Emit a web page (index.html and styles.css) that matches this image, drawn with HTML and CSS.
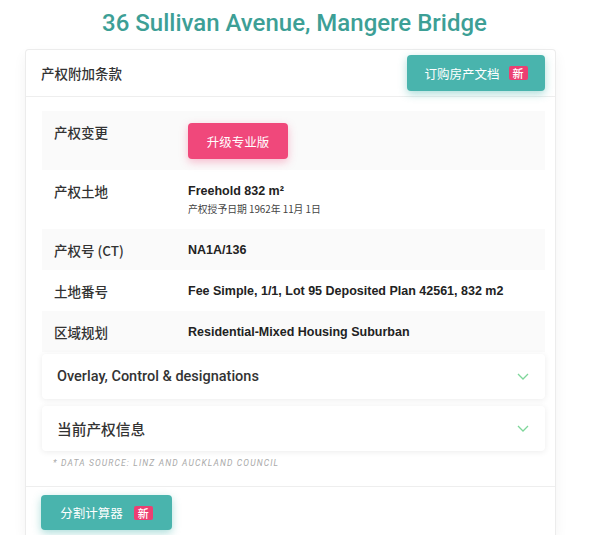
FILE: index.html
```html
<!doctype html>
<html lang="zh">
<head>
<meta charset="UTF-8">
<title>36 Sullivan Avenue, Mangere Bridge</title>
<link rel="stylesheet" href="styles.css">
</head>
<body>
<h1 class="title">36 Sullivan Avenue, Mangere Bridge</h1>

<div class="card">
  <div class="card_head">
    <span class="head_label">产权附加条款</span>
    <a class="btn btn_teal btn_order" href="#">订购房产文档 <span class="badge">新</span></a>
  </div>

  <div class="card_body">
    <div class="row row_gray row_tall">
      <div class="row_label">产权变更</div>
      <div class="row_value"><a class="btn btn_pink" href="#">升级专业版</a></div>
    </div>
    <div class="row row_tall">
      <div class="row_label">产权土地</div>
      <div class="row_value">
        <div class="val">Freehold 832 m²</div>
        <div class="sub">产权授予日期 1962年 11月 1日</div>
      </div>
    </div>
    <div class="row row_gray">
      <div class="row_label">产权号 (CT)</div>
      <div class="row_value"><div class="val">NA1A/136</div></div>
    </div>
    <div class="row">
      <div class="row_label">土地番号</div>
      <div class="row_value"><div class="val">Fee Simple, 1/1, Lot 95 Deposited Plan 42561, 832 m2</div></div>
    </div>
    <div class="row row_gray">
      <div class="row_label">区域规划</div>
      <div class="row_value"><div class="val">Residential-Mixed Housing Suburban</div></div>
    </div>

    <div class="fold">
      <span class="fold_title">Overlay, Control &amp; designations</span>
      <svg class="chev" width="12" height="7" viewBox="0 0 12 7"><path d="M1 1l5 5 5-5" fill="none" stroke="#7ed69a" stroke-width="1.3"/></svg>
    </div>
    <div class="fold">
      <span class="fold_title cjk">当前产权信息</span>
      <svg class="chev" width="12" height="7" viewBox="0 0 12 7"><path d="M1 1l5 5 5-5" fill="none" stroke="#7ed69a" stroke-width="1.3"/></svg>
    </div>

    <div class="source">* Data source: LINZ and Auckland Council</div>
  </div>

  <div class="card_foot">
    <a class="btn btn_teal btn_calc" href="#">分割计算器 <span class="badge">新</span></a>
  </div>
</div>
</body>
</html>
```

FILE: styles.css
```css
*{
  margin:0;
  padding:0;
  box-sizing:border-box;
}
body{
  background:#fff;
  font-family:"Noto Sans CJK SC","Noto Sans",sans-serif;
  color:#333;
}
a{
  text-decoration:none;
}
.title{
  font-family:Roboto,"Noto Sans",sans-serif;
  font-weight:500;
  font-size:24px;
  line-height:28px;
  color:#3d9f96;
  text-align:center;
  padding:9px 0 0 0;
}
.card{
  margin:12px 0 0 25px;
  width:531px;
  height:486px;
  border:1px solid #ececec;
  border-bottom:none;
  border-radius:4px 4px 0 0;
  background:#fff;
  box-shadow:0 6px 14px rgba(0,0,0,0.05);
}
.card_head{
  display:flex;
  align-items:center;
  justify-content:space-between;
  height:47px;
  padding:0 10px 0 15px;
  border-bottom:1px solid #eee;
}
.head_label{
  font-size:13.5px;
  font-weight:500;
  color:#333;
}
.btn{
  display:inline-flex;
  align-items:center;
  justify-content:center;
  color:#fff;
  border-radius:4px;
  font-size:12.5px;
}
.btn_teal{
  background:#49b4ad;
  box-shadow:0 3px 8px rgba(73,180,173,0.45);
}
.btn_order{
  width:138px;
  height:36px;
  gap:9px;
}
.btn_pink{
  width:100px;
  height:36px;
  background:#f0487b;
  box-shadow:0 3px 8px rgba(240,72,123,0.35);
}
.badge{
  display:inline-block;
  background:#ec3f72;
  color:#fff;
  font-size:11px;
  font-weight:500;
  line-height:14px;
  padding:0 4px;
  border-radius:2px;
}
.card_body{
  padding:14px 10px 0 16px;
  height:390px;
  border-bottom:1px solid #eee;
}
.row{
  display:flex;
  align-items:center;
  height:41px;
  padding-left:12px;
  padding-top:1px;
}
.row_tall{
  align-items:flex-start;
  height:59px;
  padding-top:13px;
}
.row_gray{
  background:#fafafa;
}
.row_label{
  width:134px;
  font-size:13.5px;
  font-weight:500;
  line-height:16px;
  color:#333;
}
.row_tall .btn_pink{
  margin-top:-1px;
}
.val{
  font-family:"Liberation Sans",Arial,sans-serif;
  font-weight:bold;
  font-size:12.5px;
  line-height:16px;
  color:#222;
}
.sub{
  font-size:9.8px;
  line-height:12px;
  color:#444;
  margin-top:4px;
}
.fold{
  display:flex;
  align-items:center;
  justify-content:space-between;
  height:45px;
  margin-top:2px;
  padding:0 16px 0 15px;
  background:#fff;
  border-radius:4px;
  box-shadow:0 1px 6px rgba(0,0,0,0.08);
}
.fold + .fold{
  margin-top:7px;
}
.fold_title{
  font-family:Roboto,"Noto Sans",sans-serif;
  font-weight:500;
  font-size:14.5px;
  color:#333;
}
.fold_title.cjk{
  font-family:"Noto Sans CJK SC",sans-serif;
  font-size:14.7px;
}
.source{
  font-family:Roboto,"Noto Sans",sans-serif;
  font-style:italic;
  font-size:8.5px;
  letter-spacing:1.15px;
  text-transform:uppercase;
  color:#aaa;
  padding:7px 0 0 11px;
}
.card_foot{
  padding:8px 0 0 15px;
}
.btn_calc{
  width:131px;
  height:35px;
  gap:11px;
}
```
